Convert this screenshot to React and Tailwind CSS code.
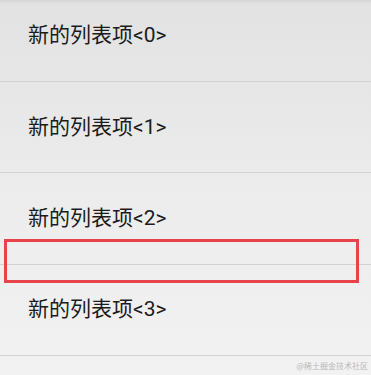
const items = [0, 1, 2, 3];

export default function App() {
  return (
    <div className="relative w-[371px] h-[375px] overflow-hidden bg-gradient-to-b from-[#e2e2e2] via-[#ececec] to-[#f2f2f2]">
      <div className="absolute top-0 left-0 w-full h-[4px] bg-gradient-to-b from-[#d6d6d6] to-transparent" />
      <div className="flex flex-col mt-[-9.4px]">
        {items.map((i) => (
          <div
            key={i}
            className="h-[91.4px] flex items-center pl-[28px] border-b border-[#d2d2d2]"
          >
            <span
              className="text-[21px] text-[#1c1c1c] leading-none"
              style={{ fontFamily: 'Roboto, "Noto Sans CJK SC", sans-serif' }}
            >
              新的列表项&lt;{i}&gt;
            </span>
          </div>
        ))}
        <div className="h-[91.4px]" />
      </div>
      <div className="absolute left-[4px] top-[239px] w-[355px] h-[44px] border-[3px] border-[#e8424a]" />
      <div
        className="absolute right-[3px] bottom-[3px] text-[8px] text-[#b8b8b8]"
        style={{ fontFamily: '"Noto Sans CJK SC", sans-serif' }}
      >
        @稀土掘金技术社区
      </div>
    </div>
  );
}
